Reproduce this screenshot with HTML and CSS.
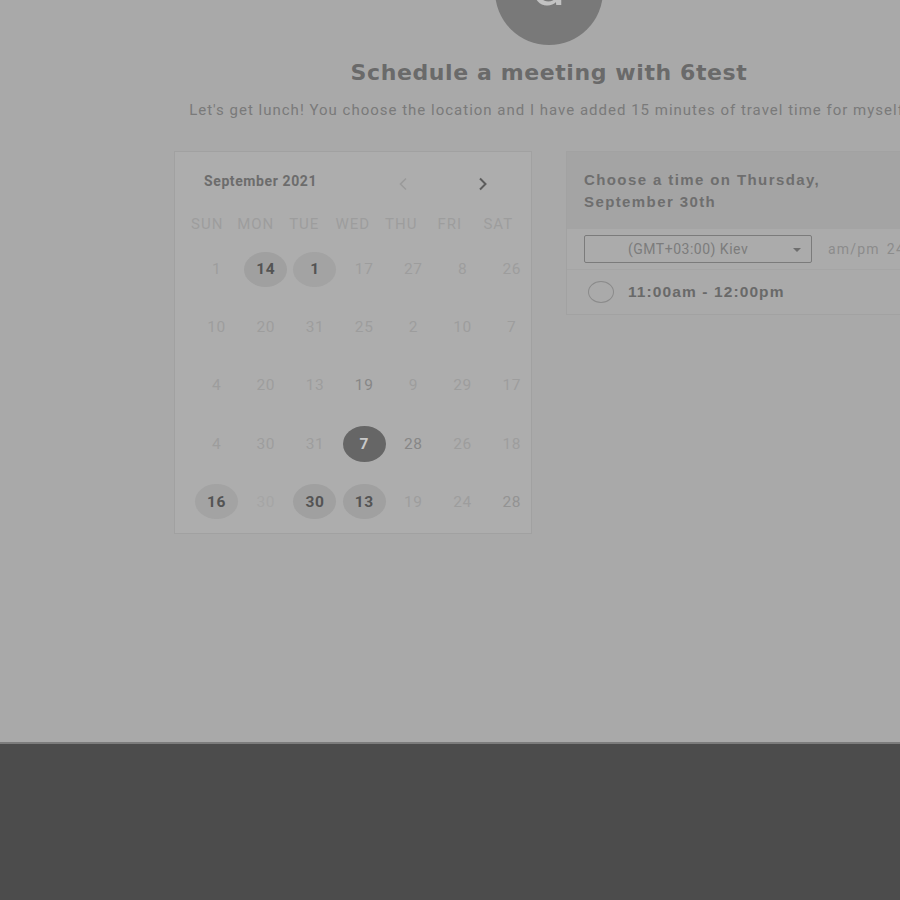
FILE: index.html
```html
<!DOCTYPE html>
<html>
<head>
<meta charset="utf-8">
<link rel="stylesheet" href="styles.css">
</head>
<body>
<div class="page">
  <div class="wrap">
    <div class="avatar"><span>d</span></div>
    <h1 class="title">Schedule a meeting with 6test</h1>
    <p class="subtitle">Let's get lunch! You choose the location and I have added 15 minutes of travel time for myself.</p>
    <div class="columns">
      <div class="calendar">
        <div class="cal-head">
          <span class="month">September 2021</span>
          <div class="nav">
            <svg class="prev" width="10" height="14" viewBox="0 0 10 14"><path d="M8 1.5 L2.5 7 L8 12.5" fill="none" stroke="currentColor" stroke-width="1.6"/></svg>
            <svg class="next" width="10" height="14" viewBox="0 0 10 14"><path d="M2 1.5 L7.5 7 L2 12.5" fill="none" stroke="currentColor" stroke-width="2"/></svg>
          </div>
        </div>
        <div class="weekdays">
          <span>SUN</span><span>MON</span><span>TUE</span><span>WED</span><span>THU</span><span>FRI</span><span>SAT</span>
        </div>
        <div class="dates">
          <span>1</span><span class="avail">14</span><span class="avail tex">1</span><span>17</span><span>27</span><span>8</span><span>26</span>
          <span>10</span><span>20</span><span>31</span><span>25</span><span>2</span><span>10</span><span>7</span>
          <span>4</span><span>20</span><span>13</span><span class="mid">19</span><span>9</span><span>29</span><span>17</span>
          <span>4</span><span>30</span><span>31</span><span class="sel">7</span><span class="mid">28</span><span>26</span><span>18</span>
          <span class="avail tex">16</span><span class="faint">30</span><span class="avail">30</span><span class="avail">13</span><span>19</span><span>24</span><span class="mid2">28</span>
        </div>
      </div>
      <div class="times">
        <div class="times-head">Choose a time on Thursday,<br>September 30th</div>
        <div class="tz-row">
          <div class="select">(GMT+03:00) Kiev<span class="caret"></span></div>
          <span class="fmt">am/pm</span><span class="fmt">24h</span>
        </div>
        <div class="slot">
          <span class="radio"></span>
          <span class="slot-text">11:00am - 12:00pm</span>
        </div>
      </div>
    </div>
  </div>
</div>
<div class="footer"></div>
</body>
</html>
```
FILE: styles.css
```css
html, body {
  margin: 0;
  padding: 0;
  overflow: hidden;
}
body {
  background: #a9a9a9;
  font-family: "Liberation Sans", Arial, sans-serif;
  width: 900px;
  height: 900px;
}
.page {
  height: 742px;
  overflow: hidden;
}
.wrap {
  width: 1098px;
  display: flex;
  flex-direction: column;
  align-items: center;
}
.avatar {
  width: 108px;
  height: 108px;
  border-radius: 50%;
  background: #797979;
  margin-top: -63px;
  display: flex;
  align-items: center;
  justify-content: center;
}
.avatar span {
  color: #c2c2c2;
  font-family: Roboto, sans-serif;
  font-size: 52px;
  line-height: 1;
  margin-top: -6px;
  transform: scaleX(1.15);
}
.title {
  margin: 15px 0 0;
  font-family: "DejaVu Sans", "Liberation Sans", sans-serif;
  font-size: 22px;
  line-height: 26px;
  font-weight: bold;
  color: #6a6a6a;
  letter-spacing: 0.6px;
}
.subtitle {
  margin: 14px 0 0;
  font-family: Roboto, "Liberation Sans", sans-serif;
  font-size: 15px;
  line-height: 20px;
  color: #7a7a7a;
  letter-spacing: 1px;
  white-space: nowrap;
}
.columns {
  margin-top: 31px;
  display: flex;
  gap: 34px;
  align-items: flex-start;
}
.calendar {
  width: 356px;
  height: 381px;
  border: 1px solid #a1a1a1;
  background: #adadad;
  font-family: Roboto, sans-serif;
}
.cal-head {
  display: flex;
  align-items: flex-start;
  padding: 21px 0 0 29px;
  height: 38px;
}
.month {
  font-size: 14px;
  line-height: 16px;
  font-weight: bold;
  color: #6c6c6c;
  letter-spacing: 0.6px;
}
.nav {
  display: flex;
  gap: 70px;
  margin-left: 81px;
  padding-top: 4px;
}
.prev { color: #9a9a9a; }
.next { color: #5c5c5c; }
.weekdays {
  display: grid;
  grid-template-columns: repeat(7, 48.5px);
  padding-left: 8px;
  height: 26px;
  align-items: center;
  font-size: 15px;
  letter-spacing: 1px;
  color: #9d9d9d;
}
.weekdays span {
  text-align: center;
}
.dates {
  display: grid;
  grid-template-columns: repeat(7, 49.2px);
  grid-auto-rows: 58.2px;
  padding-top: 3px;
  padding-left: 17px;
  font-size: 15.5px;
  letter-spacing: 0.6px;
  color: #9d9d9d;
}
.dates span {
  display: flex;
  align-items: center;
  justify-content: center;
  justify-self: center;
  align-self: center;
  width: 43px;
  height: 35px;
  border-radius: 50%;
}
.dates .mid { color: #878787; }
.dates .mid2 { color: #939393; }
.dates .faint { color: #a5a5a5; }
.dates .avail {
  background: #a0a0a0;
  color: #545454;
  font-weight: bold;
}
.dates .tex {
  background: #a3a3a3;
}
.dates .sel {
  background: #666666;
  color: #c8c8c8;
  font-weight: bold;
  height: 36px;
}
.times {
  width: 356px;
  border: 1px solid #a2a2a2;
  background: #aaaaaa;
}
.times-head {
  background: #a4a4a4;
  padding: 17px 17px 16px;
  font-size: 15px;
  line-height: 22px;
  font-weight: bold;
  letter-spacing: 1.4px;
  color: #6e6e6e;
}
.tz-row {
  display: flex;
  align-items: center;
  padding: 6px 0 6px 17px;
  border-bottom: 1px solid #a5a5a5;
  background: #ababab;
}
.select {
  position: relative;
  width: 226px;
  height: 26px;
  border: 1px solid #7b7b7b;
  border-radius: 2px;
  font-family: Roboto, sans-serif;
  font-size: 14px;
  letter-spacing: 0.5px;
  line-height: 26px;
  color: #7c7c7c;
  text-indent: 43px;
}
.caret {
  position: absolute;
  right: 10px;
  top: 12px;
  width: 0;
  height: 0;
  border-left: 4px solid transparent;
  border-right: 4px solid transparent;
  border-top: 4px solid #6e6e6e;
}
.fmt {
  font-family: Roboto, sans-serif;
  font-size: 14px;
  letter-spacing: 1.2px;
  color: #8c8c8c;
  margin-left: 16px;
}
.fmt + .fmt {
  margin-left: 7px;
}
.slot {
  display: flex;
  align-items: center;
  height: 44px;
  padding-left: 21px;
}
.radio {
  width: 24px;
  height: 20px;
  border: 1px solid #8b8b8b;
  border-radius: 50%;
}
.slot-text {
  margin-left: 14px;
  font-size: 15.5px;
  font-weight: bold;
  letter-spacing: 1.1px;
  color: #696969;
}
.footer {
  height: 156px;
  background: #4c4c4c;
  border-top: 2px solid #7c7c7c;
}
```
